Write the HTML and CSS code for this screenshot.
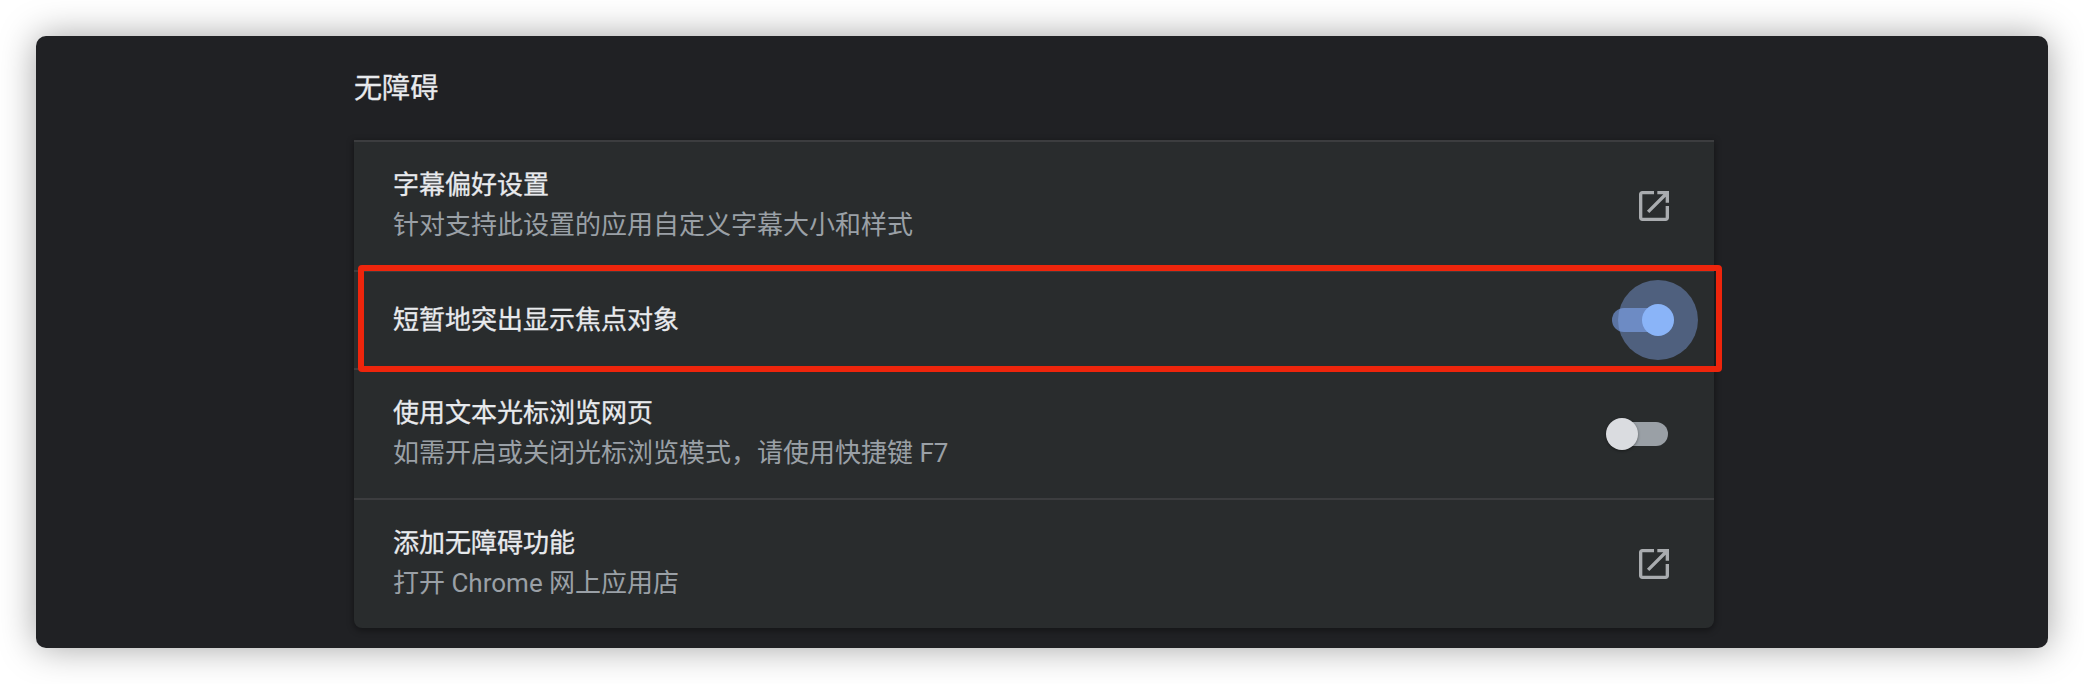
FILE: index.html
```html
<!DOCTYPE html>
<html lang="zh-CN">
<head>
<meta charset="utf-8">
<title>无障碍</title>
<link rel="stylesheet" href="styles.css">
</head>
<body>
<main class="window">
  <section class="settings">
    <h1 class="heading">无障碍</h1>
    <div class="card">
      <div class="row">
        <div class="text">
          <div class="title">字幕偏好设置</div>
          <div class="sub">针对支持此设置的应用自定义字幕大小和样式</div>
        </div>
        <svg class="icon" viewBox="0 0 24 24"><path d="M19 19H5V5h7V3H5c-1.11 0-2 .9-2 2v14c0 1.1.89 2 2 2h14c1.1 0 2-.9 2-2v-7h-2v7zM14 3v2h3.59l-9.83 9.83 1.41 1.41L19 6.41V10h2V3h-7z"/></svg>
      </div>
      <div class="row short">
        <div class="text">
          <div class="title">短暂地突出显示焦点对象</div>
        </div>
        <div class="toggle on"><span class="bar"></span><span class="halo"></span><span class="thumb"></span></div>
        <div class="highlight"></div>
      </div>
      <div class="row">
        <div class="text">
          <div class="title">使用文本光标浏览网页</div>
          <div class="sub">如需开启或关闭光标浏览模式，请使用快捷键 F7</div>
        </div>
        <div class="toggle"><span class="bar"></span><span class="thumb"></span></div>
      </div>
      <div class="row">
        <div class="text">
          <div class="title">添加无障碍功能</div>
          <div class="sub">打开 Chrome 网上应用店</div>
        </div>
        <svg class="icon" viewBox="0 0 24 24"><path d="M19 19H5V5h7V3H5c-1.11 0-2 .9-2 2v14c0 1.1.89 2 2 2h14c1.1 0 2-.9 2-2v-7h-2v7zM14 3v2h3.59l-9.83 9.83 1.41 1.41L19 6.41V10h2V3h-7z"/></svg>
      </div>
    </div>
  </section>
</main>
</body>
</html>
```
FILE: styles.css
```css
* {
  box-sizing: border-box;
}

body {
  margin: 0;
  padding: 36px;
  height: 684px;
  overflow: hidden;
  background: #fff;
  font-family: Roboto, "Noto Sans CJK SC", sans-serif;
}

.window {
  height: 612px;
  padding: 33px 0 0 318px;
  border-radius: 10px;
  background: #202124;
  box-shadow: 0 0 36px rgba(0, 0, 0, 0.36);
}

.settings {
  width: 1360px;
}

.heading {
  margin: 0 0 31px;
  height: 40px;
  font-size: 28.08px;
  font-weight: 400;
  line-height: 40px;
  color: #e8eaed;
  -webkit-text-stroke: 0.3px #e8eaed;
}

.card {
  height: 488px;
  border-radius: 0 0 8px 8px;
  background: #292c2d;
  box-shadow: 0 2px 6px 1px rgba(0, 0, 0, 0.35);
}

.row {
  position: relative;
  display: flex;
  align-items: center;
  justify-content: space-between;
  height: 130px;
  padding: 0 40px 0 39px;
  border-top: 2px solid #3c3d3f;
}

.row.short {
  z-index: 1;
  height: 98px;
}

.text {
  padding-bottom: 2px;
  font-size: 26px;
  line-height: 40px;
  white-space: nowrap;
}

.short .text {
  padding-bottom: 1px;
}

.title,
.sub {
  height: 40px;
}

.title {
  color: #e8eaed;
  -webkit-text-stroke: 0.3px #e8eaed;
}

.sub {
  color: #9aa0a6;
}

.icon {
  width: 40px;
  height: 40px;
  fill: #a9acaf;
}

.toggle {
  position: relative;
  display: flex;
  align-items: center;
  width: 68px;
  height: 32px;
}

.bar {
  width: 56px;
  height: 24px;
  margin-left: 6px;
  border-radius: 12px;
  background: #9aa0a6;
}

.thumb {
  position: absolute;
  top: 0;
  left: 0;
  width: 32px;
  height: 32px;
  border-radius: 50%;
  background: #dadce0;
  box-shadow: 0 1px 3px rgba(0, 0, 0, 0.4);
}

.on .bar {
  background: #5b74a2;
}

.on .thumb {
  left: 36px;
  background: #8ab4f8;
  box-shadow: none;
}

.halo {
  position: absolute;
  top: -24px;
  left: 12px;
  width: 80px;
  height: 80px;
  border-radius: 50%;
  background: rgba(138, 176, 248, 0.4);
}

.highlight {
  position: absolute;
  top: -7.5px;
  left: 4px;
  width: 1364px;
  height: 107px;
  border: 6px solid #ee250c;
  border-radius: 4px;
}
```
